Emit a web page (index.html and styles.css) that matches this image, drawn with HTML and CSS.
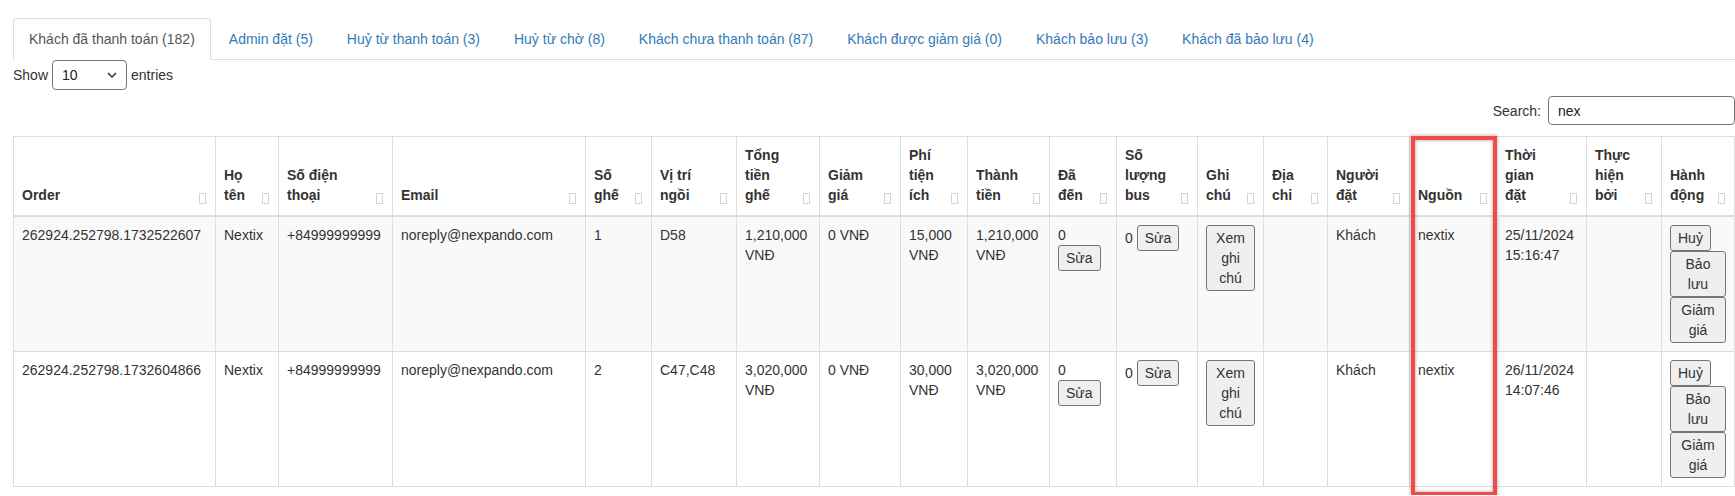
FILE: index.html
```html
<!DOCTYPE html>
<html lang="vi">
<head>
<meta charset="utf-8">
<title>Khách đã thanh toán</title>
<link rel="stylesheet" href="styles.css">
</head>
<body>
<div class="page">
  <ul class="nav-tabs">
    <li class="active"><a href="#">Khách đã thanh toán (182)</a></li>
    <li><a href="#">Admin đặt (5)</a></li>
    <li><a href="#">Huỷ từ thanh toán (3)</a></li>
    <li><a href="#">Huỷ từ chờ (8)</a></li>
    <li><a href="#">Khách chưa thanh toán (87)</a></li>
    <li><a href="#">Khách được giảm giá (0)</a></li>
    <li><a href="#">Khách bảo lưu (3)</a></li>
    <li><a href="#">Khách đã bảo lưu (4)</a></li>
  </ul>

  <div class="length">
    <span>Show</span>
    <span class="select-box"><span>10</span><svg class="chev" width="10" height="6" viewBox="0 0 10 6"><path d="M1 1 L5 5 L9 1" fill="none" stroke="#333" stroke-width="1.5"/></svg></span>
    <span>entries</span>
  </div>

  <div class="filter">
    <label for="q">Search:</label>
    <input id="q" class="search" type="text" value="nex">
  </div>

  <table class="data">
    <thead>
      <tr>
        <th>Order</th>
        <th>Họ tên</th>
        <th>Số điện thoại</th>
        <th>Email</th>
        <th>Số ghế</th>
        <th>Vị trí ngồi</th>
        <th>Tổng tiền ghế</th>
        <th>Giảm giá</th>
        <th>Phí tiện ích</th>
        <th>Thành tiền</th>
        <th>Đã đến</th>
        <th>Số lượng bus</th>
        <th>Ghi chú</th>
        <th>Địa chỉ</th>
        <th>Người đặt</th>
        <th>Nguồn<span class="highlight"></span></th>
        <th>Thời gian đặt</th>
        <th>Thực hiện bởi</th>
        <th>Hành động</th>
      </tr>
    </thead>
    <tbody>
      <tr>
        <td>262924.252798.1732522607</td>
        <td>Nextix</td>
        <td>+84999999999</td>
        <td>noreply@nexpando.com</td>
        <td>1</td>
        <td>D58</td>
        <td>1,210,000 VNĐ</td>
        <td>0 VNĐ</td>
        <td>15,000 VNĐ</td>
        <td>1,210,000 VNĐ</td>
        <td>0 <button class="btn">Sửa</button></td>
        <td>0 <button class="btn">Sửa</button></td>
        <td><button class="btn">Xem ghi chú</button></td>
        <td></td>
        <td>Khách</td>
        <td>nextix</td>
        <td>25/11/2024 15:16:47</td>
        <td></td>
        <td><button class="btn">Huỷ</button> <button class="btn">Bảo lưu</button> <button class="btn">Giảm giá</button></td>
      </tr>
      <tr>
        <td>262924.252798.1732604866</td>
        <td>Nextix</td>
        <td>+84999999999</td>
        <td>noreply@nexpando.com</td>
        <td>2</td>
        <td>C47,C48</td>
        <td>3,020,000 VNĐ</td>
        <td>0 VNĐ</td>
        <td>30,000 VNĐ</td>
        <td>3,020,000 VNĐ</td>
        <td>0 <button class="btn">Sửa</button></td>
        <td>0 <button class="btn">Sửa</button></td>
        <td><button class="btn">Xem ghi chú</button></td>
        <td></td>
        <td>Khách</td>
        <td>nextix</td>
        <td>26/11/2024 14:07:46</td>
        <td></td>
        <td><button class="btn">Huỷ</button> <button class="btn">Bảo lưu</button> <button class="btn">Giảm giá</button></td>
      </tr>
    </tbody>
  </table>
</div>
</body>
</html>
```

FILE: styles.css
```css
html {
  overflow: hidden;
}

body {
  margin: 0;
  font-family: "Liberation Sans", Arial, Helvetica, sans-serif;
  font-size: 14px;
  line-height: 20px;
  color: #333;
  background: #fff;
}

.page {
  padding: 18px 0 8px 13px;
}

/* Tabs */
.nav-tabs {
  display: flex;
  list-style: none;
  margin: 0;
  padding: 0;
  border-bottom: 1px solid #ddd;
}

.nav-tabs li {
  margin: 0 2px -1px 0;
}

.nav-tabs a {
  display: block;
  padding: 10px 15px;
  border: 1px solid transparent;
  border-radius: 4px 4px 0 0;
  color: #337ab7;
  text-decoration: none;
}

.nav-tabs .active a {
  color: #555;
  background: #fff;
  border-color: #ddd;
  border-bottom-color: transparent;
}

/* Length menu */
.length {
  display: flex;
  align-items: center;
  gap: 4px;
  height: 30px;
}

.select-box {
  box-sizing: border-box;
  width: 75px;
  height: 30px;
  display: flex;
  align-items: center;
  justify-content: space-between;
  padding: 0 9px;
  border: 1px solid #767676;
  border-radius: 4px;
  color: #222;
}

.chev {
  display: block;
}

/* Search */
.filter {
  display: flex;
  justify-content: flex-end;
  align-items: center;
  margin-top: 6px;
}

.search {
  box-sizing: border-box;
  width: 187px;
  height: 29px;
  margin: 0 0 0 7px;
  padding: 0 9px;
  border: 1px solid #767676;
  border-radius: 4px;
  font: inherit;
  color: #222;
  outline: none;
}

/* Table */
.data {
  width: 100%;
  table-layout: fixed;
  margin-top: 11px;
  border-collapse: separate;
  border-spacing: 0;
  border: 1px solid #ddd;
}

.data th,
.data td {
  box-sizing: border-box;
  padding: 8px;
  text-align: left;
  vertical-align: top;
  border-right: 1px solid #ddd;
}

.data th:last-child,
.data td:last-child {
  border-right: 0;
}

.data th {
  position: relative;
  padding-right: 30px;
  padding-bottom: 10px;
  vertical-align: bottom;
  font-weight: bold;
  border-bottom: 2px solid #ddd;
}

.data th:nth-child(1) { width: 202px; }
.data th:nth-child(2) { width: 63px; }
.data th:nth-child(3) { width: 114px; }
.data th:nth-child(4) { width: 193px; }
.data th:nth-child(5) { width: 66px; }
.data th:nth-child(6) { width: 85px; }
.data th:nth-child(7) { width: 83px; }
.data th:nth-child(8) { width: 81px; }
.data th:nth-child(9) { width: 67px; }
.data th:nth-child(10) { width: 82px; }
.data th:nth-child(11) { width: 67px; }
.data th:nth-child(12) { width: 81px; }
.data th:nth-child(13) { width: 66px; }
.data th:nth-child(14) { width: 64px; }
.data th:nth-child(15) { width: 82px; }
.data th:nth-child(16) { width: 87px; }
.data th:nth-child(17) { width: 90px; }
.data th:nth-child(18) { width: 75px; }
.data th:nth-child(19) { width: 72px; }

.data th::after {
  content: "";
  position: absolute;
  right: 9px;
  bottom: 11px;
  width: 5px;
  height: 9px;
  border: 1px solid #d4d4d4;
}

.data td {
  border-top: 1px solid #ddd;
}

.data thead + tbody tr:first-child td {
  border-top: 0;
}

.data tbody tr:nth-child(odd) td {
  background: #f9f9f9;
}

.btn {
  font: inherit;
  line-height: 20px;
  color: #333;
  background: #efefef;
  border: 1px solid #767676;
  border-radius: 3px;
  padding: 2px 7px;
  margin: 0;
  text-align: center;
}

.highlight {
  position: absolute;
  left: 1px;
  right: -1px;
  top: -1px;
  height: 360px;
  box-sizing: border-box;
  border: 4px solid #f24a4a;
  box-shadow: 0 0 3px 1px rgba(0, 0, 0, 0.22), inset 0 0 3px 1px rgba(0, 0, 0, 0.22);
  pointer-events: none;
}
```
